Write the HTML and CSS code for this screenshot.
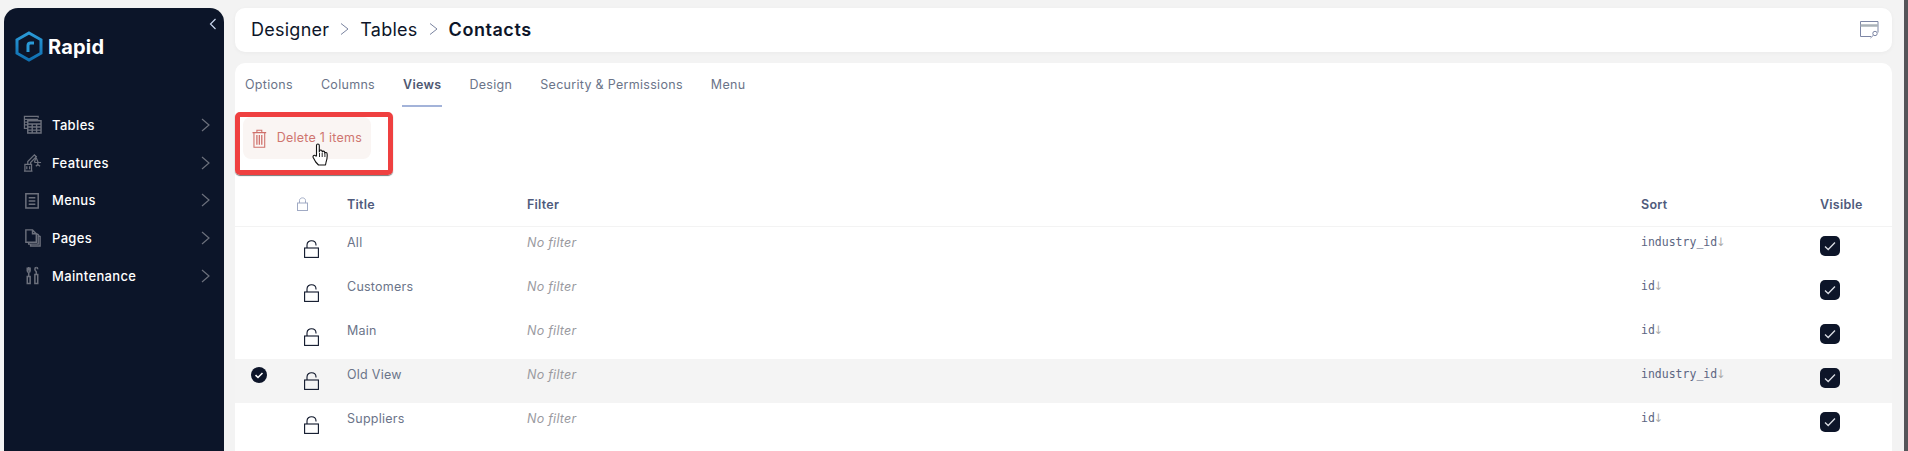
FILE: index.html
```html
<!DOCTYPE html>
<html lang="en">
<head>
<meta charset="utf-8">
<title>Rapid Designer</title>
<link rel="stylesheet" href="styles.css">
</head>
<body>
<aside class="sidebar">
  <button class="collapse" aria-label="Collapse"><svg width="8" height="12" viewBox="0 0 8 12"><path d="M6.500 1 1.500 6l5 5" fill="none" stroke="#c9d6ee" stroke-width="1.200"/></svg></button>
  <div class="logo">
    <svg width="28" height="31" viewBox="0 0 28 31"><defs><linearGradient id="lg" x1="0" y1="0" x2="0" y2="1"><stop offset="0" stop-color="#2a9ad8"/><stop offset="1" stop-color="#0f6fb0"/></linearGradient></defs><path d="M14 2 26 8.800v13.400L14 29 2 22.200V8.800Z" fill="none" stroke="url(#lg)" stroke-width="3"/><path d="M13 21v-6.500c0-1.600 1.200-2.500 2.600-2.500H19" fill="none" stroke="#2a9ad8" stroke-width="3"/></svg>
    <span class="logo-text">Rapid</span>
  </div>
  <nav class="nav">
    <a class="nav-item"><svg class="nav-icon" viewBox="0 0 20 20"><g fill="none" stroke="#6c707c" stroke-width="1.300"><path d="M16 3V1.500H1.500V14H5"/><path d="M1.500 4.500H16M1.500 7.500H5M1.500 10.500H5"/><path d="M5 6h14v13H5zM5 9.500h14M5 12.700h14M5 15.900h14M9.700 9.500V19M14.300 9.500V19" stroke-width="1.500"/></g></svg><span>Tables</span><svg class="chev" viewBox="0 0 9 14"><path d="M1 1l7 6-7 6" fill="none" stroke="#6c707c" stroke-width="1.200"/></svg></a>
    <a class="nav-item"><svg class="nav-icon" viewBox="0 0 20 20"><g fill="none" stroke="#6c707c" stroke-width="1.300"><path d="M1 19h9M2 19v-7h7v7M5 12V9l7-7 2 2-6 6v2"/><path d="M13 3l3 7M14 3l-2 7M12 10h7M15.500 10v2l-2 2M15.500 12l2.500 2"/><path d="M4 14v3M7 14v3"/></g></svg><span>Features</span><svg class="chev" viewBox="0 0 9 14"><path d="M1 1l7 6-7 6" fill="none" stroke="#6c707c" stroke-width="1.200"/></svg></a>
    <a class="nav-item"><svg class="nav-icon" viewBox="0 0 20 20"><g fill="none" stroke="#6c707c" stroke-width="1.600"><path d="M3 3h13v15H3z"/><path d="M6 7h7M6 10.500h7M6 14h7"/></g></svg><span>Menus</span><svg class="chev" viewBox="0 0 9 14"><path d="M1 1l7 6-7 6" fill="none" stroke="#6c707c" stroke-width="1.200"/></svg></a>
    <a class="nav-item"><svg class="nav-icon" viewBox="0 0 20 20"><g fill="none" stroke="#6c707c" stroke-width="1.500"><path d="M3 2h7l4 4v9H3zM10 2v4h4"/><path d="M14 6l2 1v10H6v-2M16 8l2 1v10H8v-2"/></g></svg><span>Pages</span><svg class="chev" viewBox="0 0 9 14"><path d="M1 1l7 6-7 6" fill="none" stroke="#6c707c" stroke-width="1.200"/></svg></a>
    <a class="nav-item"><svg class="nav-icon" viewBox="0 0 20 20"><g fill="none" stroke="#6c707c" stroke-width="1.600"><path d="M6 1v4M4.500 1.500V5c0 1 .7 1.500 1.500 1.500S7.500 6 7.500 5V1.500M6 6.500V11M4.500 11h3v7.500h-3z"/><path d="M14 1.500c-1 0-1.500.8-1.500 1.800S13.500 5.500 14 6v3M12.500 9h3v9.500h-3z"/><path d="M14 1.500c1 0 1.500.8 1.500 1.800"/></g></svg><span>Maintenance</span><svg class="chev" viewBox="0 0 9 14"><path d="M1 1l7 6-7 6" fill="none" stroke="#6c707c" stroke-width="1.200"/></svg></a>
  </nav>
</aside>
<main class="main">
  <header class="header">
    <div class="crumbs">
      <span>Designer</span>
      <svg class="crumb-sep" viewBox="0 0 9 14"><path d="M1 1.500 8 7l-7 5.500" fill="none" stroke="#7a84a0" stroke-width="1"/></svg>
      <span>Tables</span>
      <svg class="crumb-sep" viewBox="0 0 9 14"><path d="M1 1.500 8 7l-7 5.500" fill="none" stroke="#7a84a0" stroke-width="1"/></svg>
      <strong>Contacts</strong>
    </div>
    <svg class="header-icon" width="19" height="18" viewBox="0 0 19 18"><g fill="none" stroke="#7d86a5" stroke-width="1"><path d="M11 15.500H.5V.5h17.500v11"/><path d="M.5 4.500h17.500" stroke="#aab2b8" stroke-width="2.500"/><circle cx="15" cy="12.500" r="2.200"/><path d="M13.400 14.200 10.500 17"/></g></svg>
  </header>
  <section class="card">
    <div class="tabs">
      <a class="tab">Options</a>
      <a class="tab">Columns</a>
      <a class="tab active">Views</a>
      <a class="tab">Design</a>
      <a class="tab">Security &amp; Permissions</a>
      <a class="tab">Menu</a>
    </div>
    <div class="toolbar">
      <button class="delete">
        <svg width="15" height="19" viewBox="0 0 15 19"><g fill="none" stroke="#cf6f6a" stroke-width="1.100"><path d="M.5 3.500h14M5 3.500V1h5v2.500M2 3.500v15h11v-15"/><path d="M5 6v10M7.500 6v10M10 6v10" stroke-width="1.300"/></g></svg>
        <span class="delete-label">Delete 1 items</span>
      </button>
      <div class="highlight"></div>
      <svg class="cursor" width="18" height="24" viewBox="0 0 18 24"><path d="M4.500 13V2.500c0-2 2.800-2 2.800 0V9l.2-1c.4-1.500 2.500-1.300 2.600.2l.1.800c.4-1.300 2.300-1.200 2.500.2v1c.5-1.100 2.300-1 2.400.5.300 3-.1 6-1 8.300l-.6 3H6.500L3.700 19 1.200 14.500c-.8-1.700 1.500-3 2.500-1.500z" fill="#fff" stroke="#111" stroke-width="1.100" stroke-linejoin="round"/><path d="M7.500 10v4M10.200 10v4M12.900 10.500V14" stroke="#111" stroke-width=".9"/></svg>
    </div>
    <div class="row head">
      <div></div>
      <div class="cell-lock"><svg width="11" height="14" viewBox="0 0 11 14"><g fill="none" stroke="#a0aac4" stroke-width="1"><rect x=".5" y="6" width="10" height="7.500"/><path d="M2.500 6V3.500c0-3.500 6-3.500 6 0V6"/></g></svg></div>
      <div>Title</div>
      <div>Filter</div>
      <div>Sort</div>
      <div>Visible</div>
    </div>
    <div class="row">
      <div></div>
      <div class="cell-lock"><svg class="open-lock" width="15" height="18" viewBox="0 0 15 18"><g fill="none" stroke="#0d1529" stroke-width="1.100"><rect x=".6" y="8" width="13.800" height="9.400"/><path d="M3 8V5c0-5.700 9-5.700 9 0v.6"/></g></svg></div>
      <div class="title">All</div>
      <div class="filter">No filter</div>
      <div class="sort">industry_id<i>↓</i></div>
      <div><span class="check"><svg width="12" height="10" viewBox="0 0 12 10"><path d="M1 5.500 4.200 8.500 11 1.500" fill="none" stroke="#d8dbe2" stroke-width="1.300"/></svg></span></div>
    </div>
    <div class="row">
      <div></div>
      <div class="cell-lock"><svg class="open-lock" width="15" height="18" viewBox="0 0 15 18"><g fill="none" stroke="#0d1529" stroke-width="1.100"><rect x=".6" y="8" width="13.800" height="9.400"/><path d="M3 8V5c0-5.700 9-5.700 9 0v.6"/></g></svg></div>
      <div class="title">Customers</div>
      <div class="filter">No filter</div>
      <div class="sort">id<i>↓</i></div>
      <div><span class="check"><svg width="12" height="10" viewBox="0 0 12 10"><path d="M1 5.500 4.200 8.500 11 1.500" fill="none" stroke="#d8dbe2" stroke-width="1.300"/></svg></span></div>
    </div>
    <div class="row">
      <div></div>
      <div class="cell-lock"><svg class="open-lock" width="15" height="18" viewBox="0 0 15 18"><g fill="none" stroke="#0d1529" stroke-width="1.100"><rect x=".6" y="8" width="13.800" height="9.400"/><path d="M3 8V5c0-5.700 9-5.700 9 0v.6"/></g></svg></div>
      <div class="title">Main</div>
      <div class="filter">No filter</div>
      <div class="sort">id<i>↓</i></div>
      <div><span class="check"><svg width="12" height="10" viewBox="0 0 12 10"><path d="M1 5.500 4.200 8.500 11 1.500" fill="none" stroke="#d8dbe2" stroke-width="1.300"/></svg></span></div>
    </div>
    <div class="row selected">
      <div class="cell-sel"><svg width="16" height="16" viewBox="0 0 16 16"><circle cx="8" cy="8" r="8" fill="#0d1529"/><path d="M4.500 8.200 7 10.500l4.500-4.500" fill="none" stroke="#fff" stroke-width="1.600"/></svg></div>
      <div class="cell-lock"><svg class="open-lock" width="15" height="18" viewBox="0 0 15 18"><g fill="none" stroke="#0d1529" stroke-width="1.100"><rect x=".6" y="8" width="13.800" height="9.400"/><path d="M3 8V5c0-5.700 9-5.700 9 0v.6"/></g></svg></div>
      <div class="title">Old View</div>
      <div class="filter">No filter</div>
      <div class="sort">industry_id<i>↓</i></div>
      <div><span class="check"><svg width="12" height="10" viewBox="0 0 12 10"><path d="M1 5.500 4.200 8.500 11 1.500" fill="none" stroke="#d8dbe2" stroke-width="1.300"/></svg></span></div>
    </div>
    <div class="row">
      <div></div>
      <div class="cell-lock"><svg class="open-lock" width="15" height="18" viewBox="0 0 15 18"><g fill="none" stroke="#0d1529" stroke-width="1.100"><rect x=".6" y="8" width="13.800" height="9.400"/><path d="M3 8V5c0-5.700 9-5.700 9 0v.6"/></g></svg></div>
      <div class="title">Suppliers</div>
      <div class="filter">No filter</div>
      <div class="sort">id<i>↓</i></div>
      <div><span class="check"><svg width="12" height="10" viewBox="0 0 12 10"><path d="M1 5.500 4.200 8.500 11 1.500" fill="none" stroke="#d8dbe2" stroke-width="1.300"/></svg></span></div>
    </div>
  </section>
</main>
<div class="edge"></div>
</body>
</html>
```

FILE: styles.css
```css
* { box-sizing: border-box; }
html, body { height: 100%; }
body {
  margin: 0;
  height: 451px;
  overflow: hidden;
  display: flex;
  background: #f3f3f3;
  font-family: Inter, "Open Sans", sans-serif;
  color: #0d1529;
}
.sidebar {
  position: relative;
  flex: 0 0 220px;
  margin: 8px 0 0 4px;
  background: #0c1529;
  border-radius: 14px 14px 0 0;
}
.collapse {
  position: absolute;
  top: 6px;
  right: 7px;
  width: 8px;
  height: 20px;
  padding: 0;
  border: 0;
  background: none;
  display: flex;
  align-items: center;
}
.logo {
  display: flex;
  align-items: center;
  gap: 5px;
  padding: 23px 0 0 11px;
}
.logo-text {
  color: #fff;
  font-size: 20px;
  font-weight: 700;
  letter-spacing: .2px;
}
.nav {
  display: flex;
  flex-direction: column;
  margin-top: 44px;
  padding: 0 14px 0 19px;
}
.nav-item {
  display: flex;
  align-items: center;
  height: 37.700px;
  color: #fff;
  font-size: 13px;
  font-weight: 500;
  letter-spacing: .35px;
}
.nav-item span { margin-left: 10px; flex: 1; }
.nav-icon { width: 19px; height: 19px; }
.chev { width: 9px; height: 14px; }
.main {
  flex: 1;
  margin: 8px 12px 0 11px;
  display: flex;
  flex-direction: column;
  gap: 11px;
  min-width: 0;
}
.header {
  flex: 0 0 44px;
  display: flex;
  align-items: center;
  justify-content: space-between;
  padding: 0 13px 0 16px;
  background: #fff;
  border-radius: 10px;
  box-shadow: 0 1px 4px rgba(0, 0, 0, .04);
}
.crumbs {
  display: flex;
  align-items: center;
  gap: 11px;
  padding-bottom: 2px;
  font-size: 18px;
  font-weight: 400;
  letter-spacing: .25px;
  color: #0d1529;
}
.crumbs strong { font-weight: 600; letter-spacing: .55px; }
.crumb-sep { width: 9px; height: 14px; }
.card {
  flex: 1;
  background: #fff;
  border-radius: 10px 10px 0 0;
}
.tabs {
  display: flex;
  gap: 26px;
  height: 44px;
  padding-left: 9px;
}
.tab {
  display: flex;
  align-items: center;
  padding: 0 1px;
  color: #6b7489;
  font-size: 12.500px;
  letter-spacing: .3px;
  border-bottom: 2px solid transparent;
}
.tab.active {
  color: #4f5872;
  font-weight: 600;
  border-bottom-color: #a3b3d9;
}
.toolbar {
  position: relative;
  height: 75px;
  padding: 10px 8px;
}
.delete {
  display: flex;
  align-items: center;
  gap: 10px;
  width: 128px;
  height: 42px;
  padding: 0 9px;
  border: 0;
  border-radius: 8px;
  background: #faf5f3;
  color: #cf7570;
  font: 400 12.500px Inter, sans-serif;
  letter-spacing: .25px;
  white-space: nowrap;
}
.delete-label { padding-bottom: 2px; }
.highlight {
  position: absolute;
  left: 0;
  top: 5px;
  width: 158px;
  height: 63px;
  border: 5px solid #ef4040;
  border-radius: 5px;
  box-shadow: 0 1px 1px #777;
}
.cursor {
  position: absolute;
  left: 77px;
  top: 36px;
}
.row {
  display: grid;
  grid-template-columns: 48px 64px 180px 1114px 179px 1fr;
  height: 44px;
  padding-top: 8px;
  font-size: 12.500px;
  letter-spacing: .25px;
  color: #6b7489;
}
.head {
  height: 45px;
  padding-top: 0;
  align-items: center;
  font-weight: 600;
  color: #4f5b7c;
  border-bottom: 1px solid #f3f3f3;
}
.row.selected { background: #f4f4f4; }
.cell-sel {
  padding: 0 0 0 16px;
  height: 16px;
  line-height: 0;
}
.cell-lock { padding-left: 21px; line-height: 0; }
.head .cell-lock { padding-left: 14px; }
.open-lock { margin-top: 5px; }
.title { line-height: 15px; }
.filter { font-style: italic; color: #9a9a9f; line-height: 15px; }
.sort {
  font-family: "DejaVu Sans Mono", monospace;
  font-size: 11.500px;
  letter-spacing: 0;
  line-height: 14px;
  color: #5c6682;
}
.sort i { font-family: "DejaVu Sans", sans-serif; font-style: normal; color: #aaa; margin-left: -1px; }
.check {
  display: flex;
  align-items: center;
  justify-content: center;
  width: 20px;
  height: 20px;
  margin-top: 1px;
  background: #0d1529;
  border-radius: 5px;
}
.edge {
  flex: 0 0 4px;
  background: #55555a;
}
```
